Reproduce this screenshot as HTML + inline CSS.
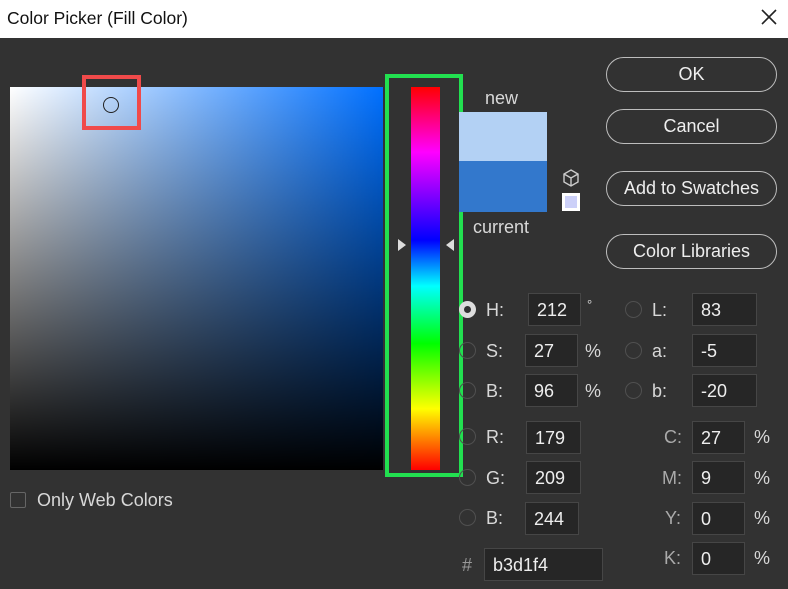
<!DOCTYPE html><html><head><style>
body{margin:0;width:788px;height:589px;background:#323232;font-family:"Liberation Sans",sans-serif;color:#d8d8d8;position:relative;overflow:hidden}
.a{position:absolute}
.t{font-size:18px}
.in{position:absolute;background:#262626;border:1px solid #464646;box-sizing:border-box;height:33px;font-size:18px;color:#eee;padding:6px 0 0 8px}
.rad{position:absolute;width:17px;height:17px;border:1.5px solid #505050;border-radius:50%;box-sizing:border-box}
.btn{position:absolute;left:606px;width:171px;height:35px;border:1.5px solid #bdbdbd;border-radius:18px;box-sizing:border-box;text-align:center;font-size:18px;line-height:32px;color:#eee}
</style></head><body>
<div class="a" style="left:0;top:0;width:788px;height:38px;background:#fff"></div>
<div class="a" style="left:7px;top:8px;color:#111;font-size:17.5px">Color Picker (Fill Color)</div>
<svg class="a" style="left:760px;top:8px" width="18" height="18"><path d="M2 2L16 16M16 2L2 16" stroke="#222" stroke-width="1.6"/></svg>
<div class="a" style="left:10px;top:87px;width:373px;height:383px;background:linear-gradient(to bottom,rgba(0,0,0,0),#000),linear-gradient(to right,#fff,#0070ff)"></div>
<div class="a" style="left:82px;top:75px;width:59px;height:55px;border:4px solid #f04a4a;box-sizing:border-box"></div>
<div class="a" style="left:103px;top:97px;width:16px;height:16px;border:1.2px solid #222;border-radius:50%;box-sizing:border-box"></div>
<div class="a" style="left:385px;top:74px;width:78px;height:403px;border:4px solid #22e050;box-sizing:border-box"></div>
<div class="a" style="left:411px;top:87px;width:29px;height:383px;background:linear-gradient(to bottom,#f00,#f0f 17%,#00f 40%,#0ff 52%,#0f0 67%,#ff0 84%,#f00)"></div>
<svg class="a" style="left:396px;top:238px" width="60" height="14"><path d="M2 1L10 7L2 13Z M58 1L50 7L58 13Z" fill="#ddd"/></svg>
<div class="a t" style="left:485px;top:88px">new</div>
<div class="a" style="left:459px;top:112px;width:88px;height:49px;background:#b3d1f4"></div>
<div class="a" style="left:459px;top:161px;width:88px;height:51px;background:#3378cc"></div>
<div class="a t" style="left:473px;top:217px">current</div>
<svg class="a" style="left:561px;top:168px" width="20" height="20"><path d="M10 2L17 6V14L10 18L3 14V6Z M3 6L10 10L17 6 M10 10V18" fill="none" stroke="#ccc" stroke-width="1.4"/></svg>
<div class="a" style="left:562px;top:193px;width:18px;height:18px;background:#fff;padding:3px;box-sizing:border-box"><div style="width:12px;height:12px;background:#ccd0f8"></div></div>
<div class="btn" style="top:57px">OK</div>
<div class="btn" style="top:109px">Cancel</div>
<div class="btn" style="top:171px">Add to Swatches</div>
<div class="btn" style="top:234px">Color Libraries</div>
<div class="a" style="left:10px;top:492px;width:16px;height:16px;border:1.5px solid #666;border-radius:2px;box-sizing:border-box"></div>
<div class="a t" style="left:37px;top:490px">Only Web Colors</div>
<div class="a" style="left:459px;top:301px;width:17px;height:17px;border-radius:50%;background:#ddd"></div><div class="a" style="left:464px;top:306px;width:7px;height:7px;border-radius:50%;background:#323232"></div>
<div class="rad" style="left:459px;top:342px"></div>
<div class="rad" style="left:459px;top:382px"></div>
<div class="rad" style="left:459px;top:428px"></div>
<div class="rad" style="left:459px;top:469px"></div>
<div class="rad" style="left:459px;top:509px"></div>
<div class="rad" style="left:625px;top:301px"></div>
<div class="rad" style="left:625px;top:342px"></div>
<div class="rad" style="left:625px;top:382px"></div>
<div class="a t" style="left:486px;top:300px">H:</div>
<div class="a t" style="left:486px;top:341px">S:</div>
<div class="a t" style="left:486px;top:381px">B:</div>
<div class="a t" style="left:486px;top:427px">R:</div>
<div class="a t" style="left:486px;top:468px">G:</div>
<div class="a t" style="left:486px;top:508px">B:</div>
<div class="a t" style="left:462px;top:555px;color:#999">#</div>
<div class="in" style="left:528px;top:293px;width:53px">212</div>
<div class="in" style="left:525px;top:334px;width:53px">27</div>
<div class="in" style="left:525px;top:374px;width:53px">96</div>
<div class="in" style="left:526px;top:421px;width:55px">179</div>
<div class="in" style="left:526px;top:461px;width:55px">209</div>
<div class="in" style="left:525px;top:502px;width:54px">244</div>
<div class="in" style="left:484px;top:548px;width:119px">b3d1f4</div>
<div class="a" style="left:587px;top:297px;font-size:13px">°</div>
<div class="a t" style="left:585px;top:341px">%</div>
<div class="a t" style="left:585px;top:381px">%</div>
<div class="a t" style="left:652px;top:300px">L:</div>
<div class="a t" style="left:652px;top:341px">a:</div>
<div class="a t" style="left:652px;top:381px">b:</div>
<div class="in" style="left:692px;top:293px;width:65px">83</div>
<div class="in" style="left:692px;top:334px;width:65px">-5</div>
<div class="in" style="left:692px;top:374px;width:65px">-20</div>
<div class="a t" style="left:664px;top:427px;color:#aaa">C:</div>
<div class="a t" style="left:662px;top:468px;color:#aaa">M:</div>
<div class="a t" style="left:665px;top:508px;color:#aaa">Y:</div>
<div class="a t" style="left:664px;top:548px;color:#aaa">K:</div>
<div class="in" style="left:692px;top:421px;width:53px">27</div>
<div class="in" style="left:692px;top:461px;width:53px">9</div>
<div class="in" style="left:692px;top:502px;width:53px">0</div>
<div class="in" style="left:692px;top:542px;width:53px">0</div>
<div class="a t" style="left:754px;top:427px">%</div>
<div class="a t" style="left:754px;top:468px">%</div>
<div class="a t" style="left:754px;top:508px">%</div>
<div class="a t" style="left:754px;top:548px">%</div>
</body></html>
